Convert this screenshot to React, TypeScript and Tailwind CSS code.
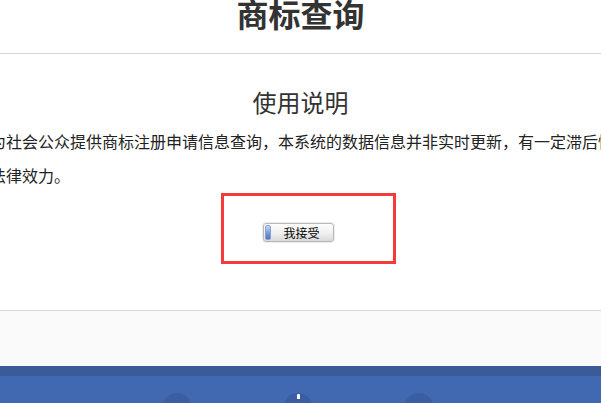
import React from 'react';

const cjk = { fontFamily: '"Noto Sans CJK SC", "Noto Sans", sans-serif' };

const AcceptButton = () => (
  <button
    type="button"
    className="flex h-[19px] w-[71px] items-center rounded-[3px] border border-[#b9b9b9] bg-gradient-to-b from-[#fdfdfd] via-[#f1f1f1] to-[#d9d9d9] p-[1px] shadow-[0_0_0_1px_#ececec]"
  >
    <span className="h-full w-[6px] rounded-[2px] border border-[#8a9fc8] bg-gradient-to-b from-[#c9d8f4] via-[#7c9ee0] to-[#4b72c9]" />
    <span className="flex-1 text-center text-[12px] leading-[15px] text-black">我接受</span>
  </button>
);

export default function App() {
  return (
    <div className="h-[403px] w-full overflow-hidden bg-white text-[#333]" style={cjk}>
      {/* header */}
      <div className="flex h-[54px] justify-center border-b border-[#d6d6d6]">
        <h1 className="-mt-[5px] text-[32px] font-bold leading-[36px] text-[#333]">商标查询</h1>
      </div>

      {/* usage notes */}
      <div className="h-[257px] border-b border-[#d3d9e0] pt-[36px]">
        <h2 className="text-center text-[24px] leading-[24px] text-[#333]">使用说明</h2>
        <div className="mt-[10px] -ml-[10px] whitespace-nowrap text-[16px] leading-[34px] text-[#222]">
          为社会公众提供商标注册申请信息查询，本系统的数据信息并非实时更新，有一定滞后性，查询结果仅供参考，不具有
          <br />
          法律效力。
        </div>
        <div className="ml-[221px] mt-[1px] h-[71px] w-[175px] border-[3px] border-[#f53a3a] pl-[39px] pt-[27px]">
          <AcceptButton />
        </div>
      </div>

      {/* footer */}
      <div className="h-[55px] bg-[#fafafa]" />
      <div className="h-[10px] bg-[#3a5a98]" />
      <div className="flex h-[30px] gap-[91px] bg-[#4169b1] pl-[162px] pt-[17px]">
        <span className="h-[30px] w-[30px] shrink-0 rounded-full bg-[#3b5ea2]" />
        <span className="relative h-[30px] w-[30px] shrink-0 rounded-full bg-[#3b5ea2]">
          <span className="absolute left-[14px] top-[1px] h-[5px] w-[3px] rounded-t-[1px] bg-white" />
        </span>
        <span className="h-[30px] w-[30px] shrink-0 rounded-full bg-[#3b5ea2]" />
      </div>
    </div>
  );
}
